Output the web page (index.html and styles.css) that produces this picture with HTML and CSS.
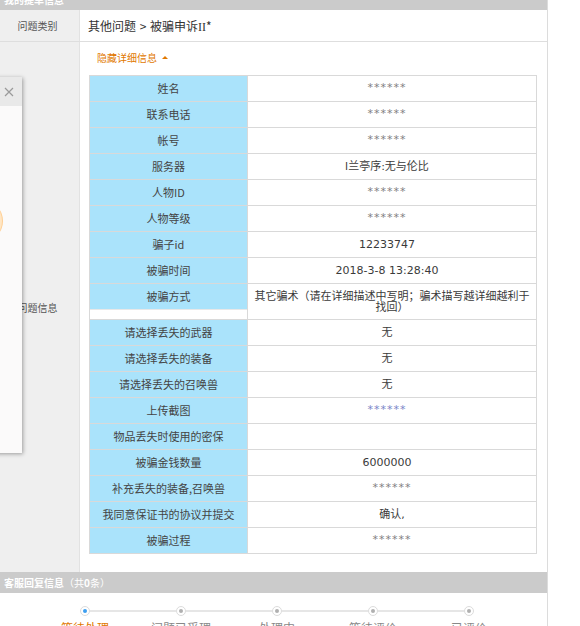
FILE: index.html
```html
<!DOCTYPE html>
<html lang="zh-CN">
<head>
<meta charset="utf-8">
<title>我的提单信息</title>
<link rel="stylesheet" href="styles.css">
</head>
<body>
<div class="page">
  <div class="bar top-bar"><b>我的提单信息</b></div>
  <div class="info">
    <div class="row row-cat">
      <div class="label">问题类别</div>
      <div class="value cat">其他问题 &gt; 被骗申诉<span class="roman">II</span>*</div>
    </div>
    <div class="row row-main">
      <div class="label">问题信息</div>
      <div class="value main">
        <a class="toggle">隐藏详细信息<span class="arrow"></span></a>
        <ul class="detail">
          <li><span class="k">姓名</span><span class="v mask">******</span></li>
          <li><span class="k">联系电话</span><span class="v mask">******</span></li>
          <li><span class="k">帐号</span><span class="v mask">******</span></li>
          <li><span class="k">服务器</span><span class="v">l兰亭序:无与伦比</span></li>
          <li><span class="k">人物ID</span><span class="v mask">******</span></li>
          <li><span class="k">人物等级</span><span class="v mask">******</span></li>
          <li><span class="k">骗子id</span><span class="v">12233747</span></li>
          <li><span class="k">被骗时间</span><span class="v">2018-3-8 13:28:40</span></li>
          <li class="tall"><span class="k">被骗方式</span><span class="v wrap">其它骗术（请在详细描述中写明；骗术描写越详细越利于找回）</span></li>
          <li><span class="k">请选择丢失的武器</span><span class="v">无</span></li>
          <li><span class="k">请选择丢失的装备</span><span class="v">无</span></li>
          <li><span class="k">请选择丢失的召唤兽</span><span class="v">无</span></li>
          <li><span class="k">上传截图</span><span class="v mask link">******</span></li>
          <li><span class="k">物品丢失时使用的密保</span><span class="v"></span></li>
          <li><span class="k">被骗金钱数量</span><span class="v">6000000</span></li>
          <li><span class="k">补充丢失的装备,召唤兽</span><span class="v mask wide">******</span></li>
          <li><span class="k">我同意保证书的协议并提交</span><span class="v wide">确认,</span></li>
          <li><span class="k">被骗过程</span><span class="v mask wide">******</span></li>
        </ul>
      </div>
    </div>
  </div>
  <div class="bar reply-bar"><b>客服回复信息</b>（共<b>0</b>条）</div>
  <div class="steps">
    <div class="step active"><div class="track"><i class="seg"></i><span class="dot"></span><i class="seg"></i></div><div class="step-label">等待处理</div></div>
    <div class="step"><div class="track"><i class="seg"></i><span class="dot"></span><i class="seg"></i></div><div class="step-label">问题已受理</div></div>
    <div class="step"><div class="track"><i class="seg"></i><span class="dot"></span><i class="seg"></i></div><div class="step-label">处理中</div></div>
    <div class="step"><div class="track"><i class="seg"></i><span class="dot"></span><i class="seg"></i></div><div class="step-label">等待评价</div></div>
    <div class="step"><div class="track"><i class="seg"></i><span class="dot"></span><i class="seg"></i></div><div class="step-label">已评价</div></div>
  </div>
</div>

<div class="dialog">
  <div class="dialog-head">
    <span class="close">
      <svg width="10" height="10" viewBox="0 0 10 10"><path d="M1 1 L9 9 M9 1 L1 9" stroke="#9a9a9a" stroke-width="1.2" fill="none"/></svg>
    </span>
  </div>
  <div class="dialog-body">
    <span class="badge"></span>
  </div>
</div>
</body>
</html>
```
FILE: styles.css
```css
* { box-sizing: border-box; }
html, body { margin: 0; padding: 0; background: #fff; }
body {
  font-family: "DejaVu Sans", "Noto Sans CJK SC", sans-serif;
  font-size: 11px;
  color: #333;
  overflow: hidden;
}
.page {
  width: 548px;
  margin-top: -11px;
  border-right: 1px solid #dcdcdc;
  min-height: 660px;
}
.bar {
  height: 21px;
  line-height: 21px;
  background: #cbcbcb;
  color: #fff;
  font-size: 10px;
  padding-left: 4px;
  font-family: "Noto Sans CJK SC", sans-serif;
  white-space: nowrap;
}
.bar b { font-weight: bold; }

.row { display: flex; border-bottom: 1px solid #dedede; }
.label {
  width: 80px;
  flex: none;
  background: #efefef;
  border-right: 1px solid #e2e2e2;
  color: #555;
  font-size: 10px;
  font-family: "Noto Sans CJK SC", sans-serif;
  display: flex;
  align-items: center;
  justify-content: center;
  padding-right: 4px;
}
.value { flex: 1; min-width: 0; }
.row-cat { height: 32px; }
.cat {
  font-family: "Noto Sans CJK SC", sans-serif;
  font-size: 12px;
  color: #333;
  line-height: 31px;
  padding-left: 8px;
  word-spacing: 1px;
}
.roman { font-family: "Liberation Serif", serif; font-size: 12px; }

.row-main { border-bottom: none; }
.main { padding: 9px 10px 18px 9px; }
.toggle {
  display: inline-flex;
  align-items: center;
  color: #e17800;
  font-family: "Noto Sans CJK SC", sans-serif;
  font-size: 10px;
  line-height: 14px;
  margin-left: 8px;
  height: 14px;
}
.arrow {
  width: 0; height: 0;
  border-left: 3px solid transparent;
  border-right: 3px solid transparent;
  border-bottom: 3px solid #e17800;
  margin-left: 5px;
  margin-top: -2px;
}

.detail {
  list-style: none;
  margin: 10px 0 0;
  padding: 0;
  border-top: 1px solid #d9d9d9;
  border-left: 1px solid #d9d9d9;
  border-right: 1px solid #d9d9d9;
  font-family: "DejaVu Sans", "Noto Sans CJK SC", sans-serif;
}
.detail li {
  display: flex;
  border-bottom: 1px solid #d9d9d9;
  min-height: 26px;
}
.k {
  width: 157px;
  flex: none;
  height: 25px;
  line-height: 25px;
  background: #aae3fb;
  text-align: center;
  color: #444;
  font-family: "Noto Sans CJK SC", sans-serif;
  font-size: 11px;
  white-space: nowrap;
}
.v {
  flex: 1;
  border-left: 1px solid #d9d9d9;
  text-align: center;
  line-height: 25px;
  padding: 0 10px 0 0;
  color: #3a3a3a;
  font-size: 11px;
  white-space: nowrap;
}
.v.wide { padding: 0; }
.mask { letter-spacing: 1px; color: #808080; font-size: 11px; line-height: 23px; }
.mask.link { color: #7a86c8; }
.detail li.tall .k { border-bottom: 1px solid #e8e8e8; height: 26px; }
.v.wrap {
  white-space: normal;
  line-height: 11px;
  padding: 7px 6px 6px;
  height: 35px;
}

.steps {
  display: flex;
  padding: 13px 0 0 37px;
  background: #fff;
}
.step { width: 96px; flex: none; display: flex; flex-direction: column; align-items: center; }
.track { width: 100%; display: flex; align-items: center; height: 10px; }
.seg { flex: 1; height: 2px; background: #e6e6e6; }
.step:first-child .seg:first-child,
.step:last-child .seg:last-child { visibility: hidden; }
.dot {
  width: 10px; height: 10px;
  border-radius: 50%;
  border: 1px solid #dcdcdc;
  background: #fff;
  flex: none;
  display: flex; align-items: center; justify-content: center;
}
.dot::after {
  content: "";
  width: 4px; height: 4px; border-radius: 50%;
  background: #b0b0b0;
}
.step.active .dot::after { background: #3d9ff0; }
.step-label {
  margin-top: 3px;
  font-family: "Noto Sans CJK SC", sans-serif;
  font-size: 12px;
  color: #888;
  white-space: nowrap;
}
.step.active .step-label { color: #e17800; }

.dialog {
  position: absolute;
  top: 77px;
  left: -278px;
  width: 300px;
  height: 376px;
  background: #fbfafa;
  box-shadow: 1px 1px 4px rgba(0,0,0,0.35);
  overflow: hidden;
}
.dialog-head {
  height: 29px;
  background: #e9e9e9;
  display: flex;
  justify-content: flex-end;
  align-items: center;
  padding-right: 8px;
}
.close { display: flex; }
.dialog-body { position: relative; height: 347px; }
.badge {
  position: absolute;
  top: 93px;
  right: 19px;
  width: 44px;
  height: 44px;
  border-radius: 50%;
  background: #ffe6c4;
  border: 1px solid #ffcf94;
}
```
